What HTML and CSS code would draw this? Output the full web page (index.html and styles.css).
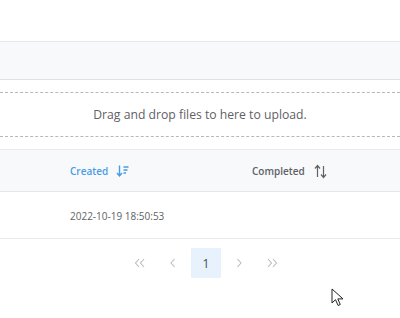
FILE: index.html
```html
<!DOCTYPE html>
<html lang="en">
<head>
    <meta charset="UTF-8">
    <title>Uploads</title>
    <link rel="stylesheet" href="styles.css">
</head>
<body>
    <div class="toolbar"></div>

    <div class="dropzone">Drag and drop files to here to upload.</div>

    <div class="table">
        <div class="row head">
            <div class="cell"></div>
            <div class="cell sorted">
                Created
                <svg class="sort-icon" width="14" height="14" viewBox="0 0 14 14">
                    <path d="M3.5 1.5v10M1 9l2.5 3 2.5-3" fill="none" stroke="currentColor" stroke-width="1.4"/>
                    <path d="M7.5 3h5M7.5 6h4M7.5 9h2.5" fill="none" stroke="currentColor" stroke-width="1.4"/>
                </svg>
            </div>
            <div class="cell">
                Completed
                <svg class="sort-icon" width="15" height="15" viewBox="0 0 15 15">
                    <path d="M4.5 13v-11M2 4.5l2.5-3 2.5 3" fill="none" stroke="currentColor" stroke-width="1.2"/>
                    <path d="M10.5 2v11M8 10.5l2.5 3 2.5-3" fill="none" stroke="currentColor" stroke-width="1.2"/>
                </svg>
            </div>
        </div>
        <div class="row body">
            <div class="cell"></div>
            <div class="cell date">2022-10-19 18:50:53</div>
            <div class="cell"></div>
        </div>
    </div>

    <div class="pager">
        <span class="page-btn">
            <svg width="12" height="10" viewBox="0 0 12 10"><path d="M5 1L1.5 5 5 9M10 1L6.5 5 10 9" fill="none" stroke="currentColor" stroke-width="1.1"/></svg>
        </span>
        <span class="page-btn">
            <svg width="6" height="10" viewBox="0 0 6 10"><path d="M4.5 1L1 5l3.5 4" fill="none" stroke="currentColor" stroke-width="1.1"/></svg>
        </span>
        <span class="page-btn current">1</span>
        <span class="page-btn">
            <svg width="6" height="10" viewBox="0 0 6 10"><path d="M1.5 1L5 5 1.5 9" fill="none" stroke="currentColor" stroke-width="1.1"/></svg>
        </span>
        <span class="page-btn">
            <svg width="12" height="10" viewBox="0 0 12 10"><path d="M2 1l3.5 4L2 9M7 1l3.5 4L7 9" fill="none" stroke="currentColor" stroke-width="1.1"/></svg>
        </span>
    </div>

    <svg class="cursor" width="14" height="20" viewBox="0 0 14 20">
        <path d="M1 1v14l3.5-3.3 2.6 5.8 2.2-1-2.5-5.6H12z" fill="#fff" stroke="#222" stroke-width="1" stroke-linejoin="round"/>
    </svg>
</body>
</html>
```

FILE: styles.css
```css
* {
    box-sizing: border-box;
}
body {
    margin: 0;
    padding: 0;
    font-family: 'Open Sans', 'Noto Sans', sans-serif;
    background-color: #fff;
    color: #606266;
    position: relative;
    height: 318px;
    overflow: hidden;
}
.toolbar {
    margin-top: 41px;
    height: 39px;
    background-color: #f7f9fb;
    border-top: 1px solid #e6e9ee;
    border-bottom: 1px solid #dfe2e7;
}
.dropzone {
    margin-top: 12px;
    height: 45px;
    border-top: 1px dashed #b8b8b8;
    border-bottom: 1px dashed #b8b8b8;
    display: flex;
    align-items: center;
    justify-content: center;
    font-size: 12.2px;
    color: #5f6166;
}
.table {
    margin-top: 12px;
}
.row {
    display: grid;
    grid-template-columns: 70px 182px 1fr;
    align-items: center;
}
.row.head {
    height: 43px;
    background-color: #f7f9fb;
    border-top: 1px solid #e6e9ee;
    border-bottom: 1px solid #e3e6eb;
    font-size: 10px;
    font-weight: 600;
    color: #606266;
    padding-top: 1px;
}
.row.body {
    height: 47px;
    border-bottom: 1px solid #e6e9ee;
    font-size: 10px;
    padding-top: 1px;
}
.cell {
    display: flex;
    align-items: center;
}
.cell.sorted {
    color: #4a9be8;
}
.sort-icon {
    margin-left: 8px;
}
.date {
    color: #606266;
}
.pager {
    display: flex;
    justify-content: center;
    gap: 3px;
    margin-top: 9px;
    padding-left: 12px;
}
.page-btn {
    width: 30px;
    height: 30px;
    display: flex;
    align-items: center;
    justify-content: center;
    font-size: 12px;
    color: #b9bcc2;
}
.page-btn.current {
    background-color: #e8f2fd;
    color: #4b4d52;
}
.cursor {
    position: absolute;
    left: 331px;
    top: 288px;
}
```
